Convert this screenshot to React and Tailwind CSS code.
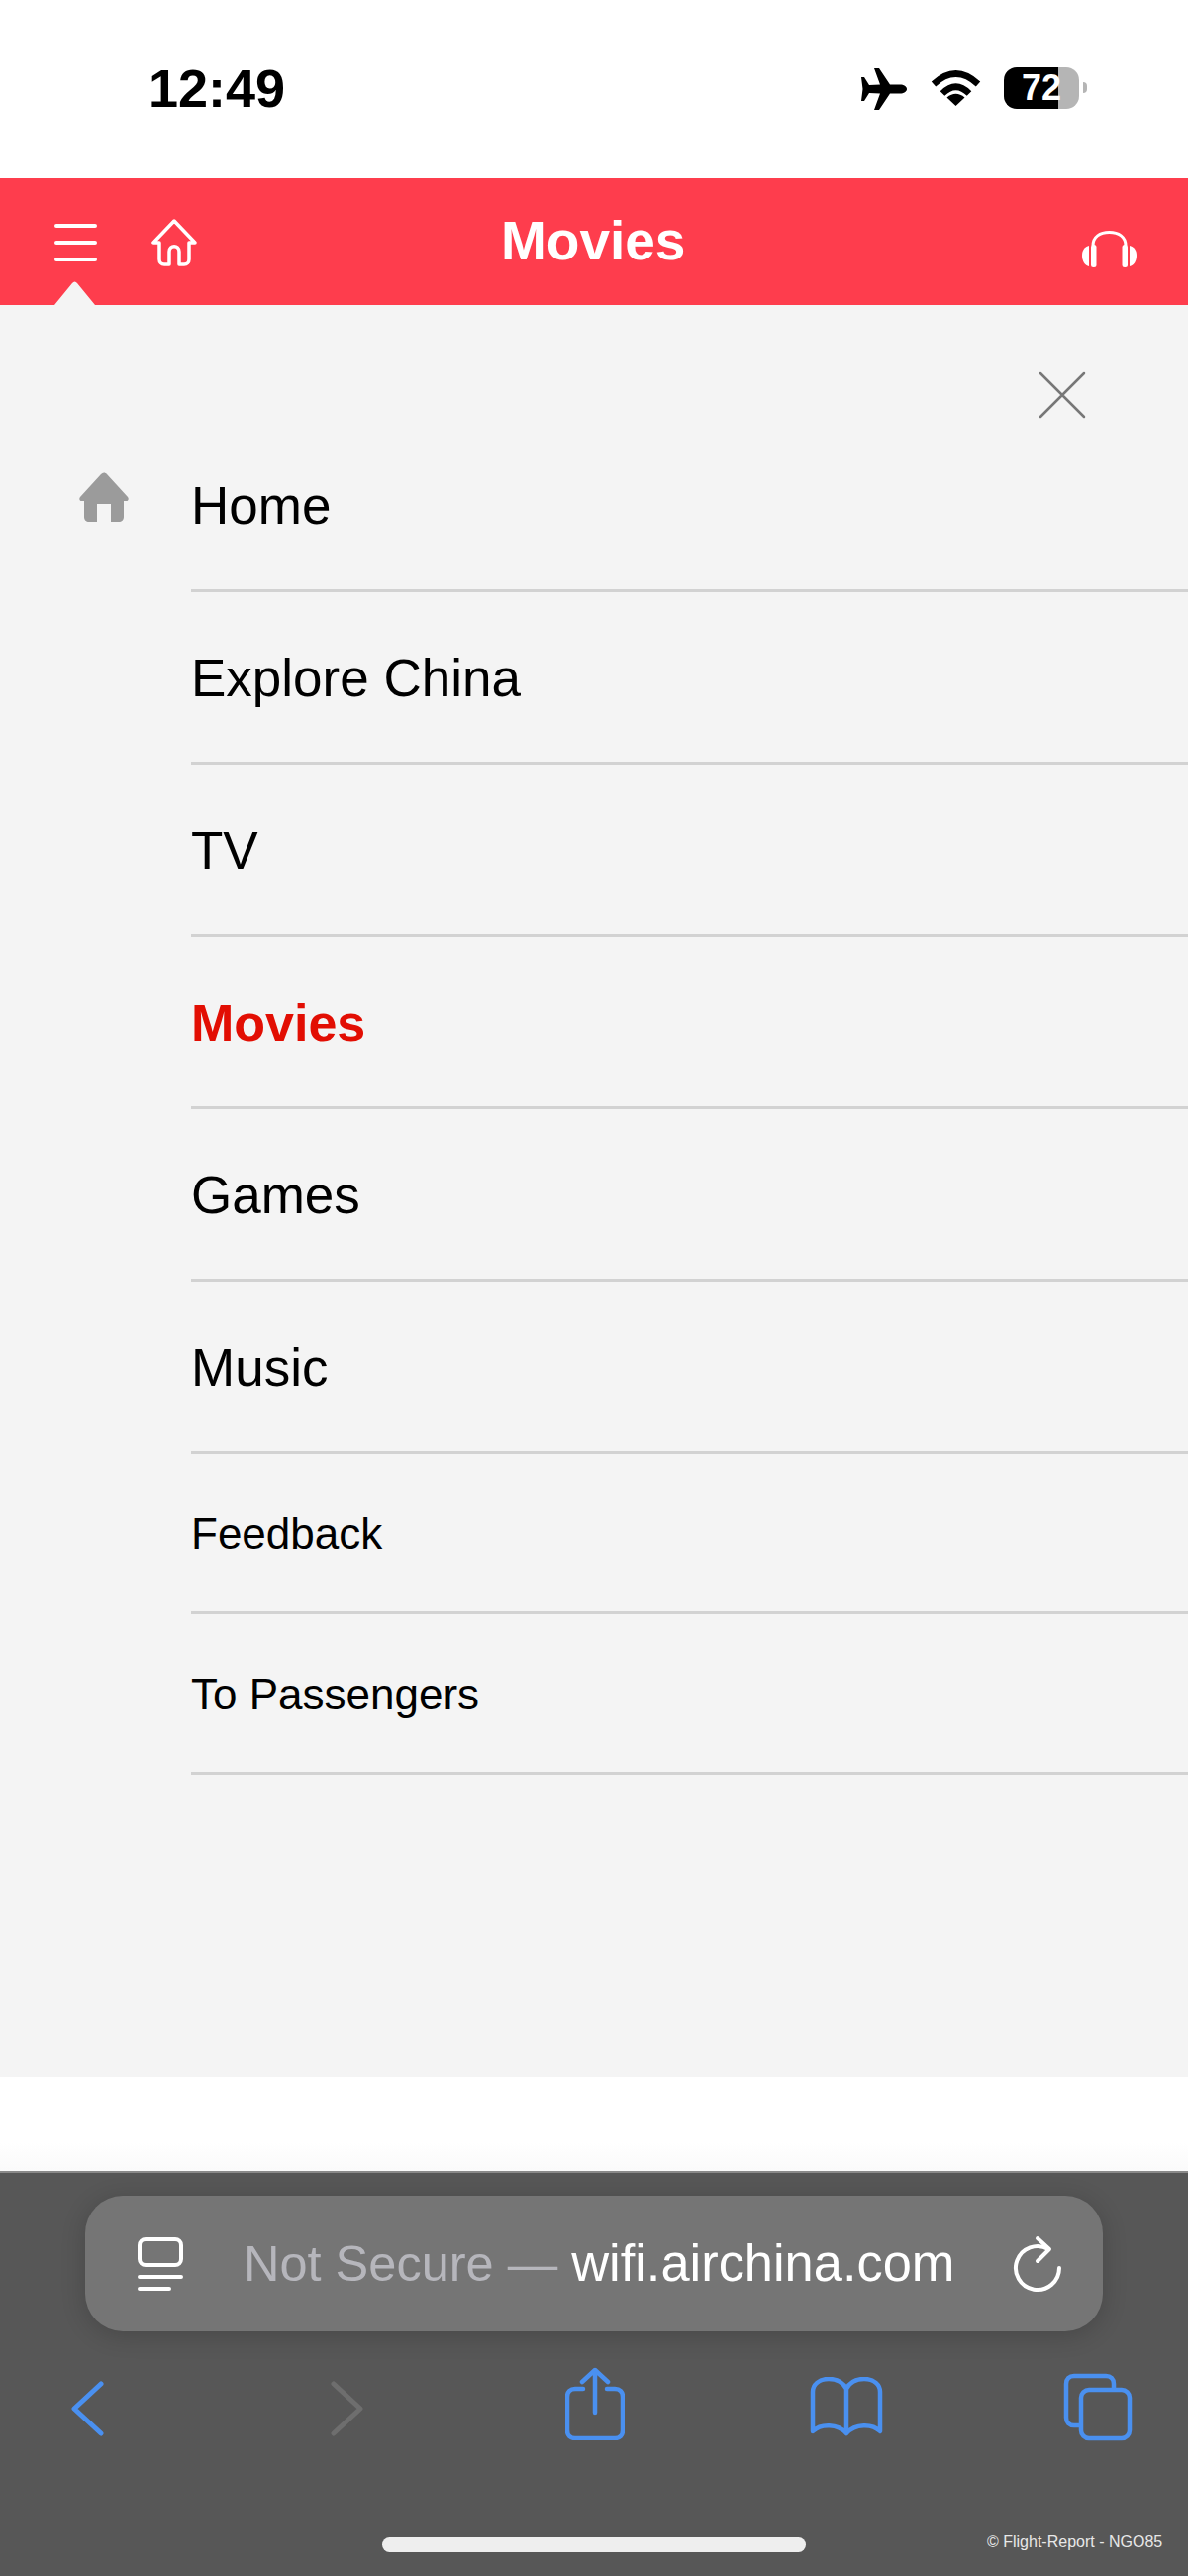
const menuItems = [
  { label: "Home", icon: true },
  { label: "Explore China" },
  { label: "TV" },
  { label: "Movies", active: true },
  { label: "Games" },
  { label: "Music" },
  { label: "Feedback", small: true },
  { label: "To Passengers", small: true },
];

const font = "font-['Liberation_Sans',Arial,sans-serif]";

const StatusBar = () => (
  <div className="h-[180px] bg-white flex items-start text-black">
    <span className="ml-[150px] mt-[59px] text-[54px] leading-[60px] font-bold">12:49</span>
    <svg className="ml-[581px] mt-[69px]" width="48" height="42" viewBox="0 0 48 42" fill="#000">
      <path d="M47 21c0-2.500-3-4.500-7-4.500L30 16.500 19 0h-5l6 16.500L9 17 4 9H1l1.500 12L1 33h3l5-8 11 .5L14 42h5l11-16.500 10 0c4 0 7-2 7-4.500z" />
    </svg>
    <svg className="ml-[23px] mt-[70px]" width="51" height="37" viewBox="0 0 51 37" fill="none" stroke="#000" strokeWidth="6.500">
      <path d="M3 15Q25.500-6 48 15" />
      <path d="M12 24.500Q25.500 11 39 24.500" />
      <path d="M16.500 28.500Q25.500 21 34.500 28.500L25.500 37z" fill="#000" stroke="none" />
    </svg>
    <div className="ml-[23px] mt-[68px] w-[76px] h-[42px] rounded-[13px] bg-[linear-gradient(90deg,#000_72%,#b5b5b5_72%)] text-white text-[36px] leading-[42px] font-bold text-center">
      72
    </div>
    <div className="ml-[4px] mt-[83px] w-[4px] h-[11px] rounded-r-full bg-[#b5b5b5]"></div>
  </div>
);

const Header = () => (
  <div className="relative h-[128px] bg-[#fe3d4d] flex items-start text-white">
    <div className="ml-[55px] mt-[46px] w-[43px] flex flex-col gap-[13px]">
      <div className="h-[4px] rounded-full bg-white"></div>
      <div className="h-[4px] rounded-full bg-white"></div>
      <div className="h-[4px] rounded-full bg-white"></div>
    </div>
    <svg className="ml-[55px] mt-[41px]" width="46" height="48" viewBox="0 0 46 48" fill="none" stroke="#fff" strokeWidth="3.500" strokeLinejoin="round">
      <path d="M23 2 2 24h6v17c0 3 2 5 5 5h5V33c0-7 10-7 10 0v13h5c3 0 5-2 5-5V24h6z" />
    </svg>
    <span className="ml-[307px] mt-[32px] text-[55px] leading-[62px] font-bold">Movies</span>
    <svg className="ml-auto mr-[52px] mt-[53px]" width="55" height="37" viewBox="0 0 55 37" fill="#fff">
      <path d="M11 15C11 6 18 1.500 27.500 1.500S44 6 44 15" fill="none" stroke="#fff" strokeWidth="3" />
      <path d="M7 15v21C3 35 0 31 0 25s3-9 7-10z" />
      <rect x="9" y="14" width="5.500" height="23" rx="2.500" />
      <path d="M48 15v21c4-1 7-5 7-11s-3-9-7-10z" />
      <rect x="40.500" y="14" width="5.500" height="23" rx="2.500" />
    </svg>
    {/* little arrow above the open menu */}
    <svg className="absolute left-[55px] top-[104px]" width="41" height="24" viewBox="0 0 41 24" fill="#f4f4f4">
      <path d="M0 24 18 2c1.500-2 3.500-2 5 0l18 22z" />
    </svg>
  </div>
);

const Menu = () => (
  <div className="h-[1789px] bg-[#f4f4f4] pt-[67px]">
    <div className="h-[49px] flex justify-end pr-[103px]">
      <svg width="48" height="48" viewBox="0 0 48 48" stroke="#777" strokeWidth="2.500" strokeLinecap="round">
        <path d="M2 2 46 46M46 2 2 46" />
      </svg>
    </div>
    {menuItems.map((item) => (
      <div key={item.label} className="flex">
        <div className="w-[193px] pl-[80px] pt-[53px]">
          {item.icon && (
            <svg width="50" height="50" viewBox="0 0 50 50" fill="#9b9b9b">
              <path d="M22 2c1.800-2 4.200-2 6 0l21 23c1.500 2 .5 4-1.500 4H45v16c0 3-2 5-5 5h-8V32H18v18h-8c-3 0-5-2-5-5V29H2.500c-2 0-3-2-1.500-4z" />
            </svg>
          )}
        </div>
        <div
          className={`flex-1 flex items-center pt-[2px] border-b-[3px] border-[#d2d2d2] ${
            item.small ? "h-[162px] text-[44px]" : "h-[174px]"
          } ${item.active ? "font-bold text-[#e20e03] text-[52px]" : "text-black"} ${
            !item.small && !item.active ? "text-[53px]" : ""
          }`}
        >
          {item.label}
        </div>
      </div>
    ))}
  </div>
);

const Toolbar = () => (
  <div className="h-[409px] bg-[#575757] border-t-[2px] border-[#8a8a8a] pt-[23px]">
    <div className="ml-[86px] w-[1028px] h-[137px] rounded-[38px] bg-[#757575] shadow-[0_4px_24px_rgba(0,0,0,0.18)] flex items-center">
      <svg className="ml-[53px]" width="46" height="54" viewBox="0 0 46 54" fill="none" stroke="#fff" strokeWidth="4" strokeLinecap="round">
        <rect x="2" y="2" width="42" height="26" rx="6" />
        <path d="M2 40h42M2 52h30" />
      </svg>
      <span className="ml-[61px] text-[50.500px] leading-[60px] whitespace-nowrap text-[#b6b6bc]">
        Not Secure — <span className="text-white text-[52.400px]">wifi.airchina.com</span>
      </span>
      <svg className="ml-[58px]" width="55" height="62" viewBox="20 12 55 62" fill="none" stroke="#fff" strokeWidth="4" strokeLinecap="round" strokeLinejoin="round">
        <path d="M68 47A22 22 0 1 1 57 28" />
        <path d="M46 17 58 28 46 40" />
      </svg>
    </div>
    <div className="h-[96px] mt-[36px] flex items-start text-[#4a90f0]">
      <svg className="ml-[70px] mt-[14px]" width="36" height="56" viewBox="0 0 36 56" fill="none" stroke="currentColor" strokeWidth="5" strokeLinecap="round" strokeLinejoin="round">
        <path d="M32 3 5 28 32 53" />
      </svg>
      <svg className="ml-[227px] mt-[14px]" width="36" height="56" viewBox="0 0 36 56" fill="none" stroke="#6e6e6e" strokeWidth="5" strokeLinecap="round" strokeLinejoin="round">
        <path d="M4 3 31 28 4 53" />
      </svg>
      <svg className="ml-[202px]" width="60" height="74" viewBox="0 0 60 74" fill="none" stroke="currentColor" strokeWidth="4.500" strokeLinecap="round" strokeLinejoin="round">
        <path d="M18 22h-8c-5 0-8 3-8 8v34c0 5 3 8 8 8h40c5 0 8-3 8-8V30c0-5-3-8-8-8h-8" />
        <path d="M30 46V3M17 15 30 3l13 12" />
      </svg>
      <svg className="ml-[187px] mt-[10px]" width="74" height="60" viewBox="0 0 74 60" fill="none" stroke="currentColor" strokeWidth="4.500" strokeLinecap="round" strokeLinejoin="round">
        <path d="M37 12C33 4 25 2 19 2 9 2 3 8 3 15v40c8-8 25-8 34 2 9-10 26-10 34-2V15c0-7-6-13-16-13-6 0-14 2-18 10v45" />
      </svg>
      <svg className="ml-[182px] mt-[6px]" width="70" height="69" viewBox="0 0 70 69" fill="none" stroke="currentColor" strokeWidth="4.500" strokeLinejoin="round">
        <path d="M17 53h-6c-5 0-8-3-8-8V11c0-5 3-8 8-8h32c5 0 8 3 8 8v6" />
        <rect x="18" y="17" width="49" height="49" rx="8" />
      </svg>
    </div>
    <div className="mt-[72px] flex items-center">
      <div className="ml-[386px] w-[428px] h-[15px] rounded-full bg-[#eeeeee]"></div>
      <span className="ml-[183px] mb-[4px] text-[16px] leading-[18px] whitespace-nowrap text-[#e8e8e8]">© Flight-Report - NGO85</span>
    </div>
  </div>
);

const App = () => (
  <div className={`w-[1200px] h-[2601px] overflow-hidden bg-white ${font}`}>
    <StatusBar />
    <Header />
    <Menu />
    <div className="h-[95px] bg-[linear-gradient(#ffffff_70%,#fafafa)]"></div>
    <Toolbar />
  </div>
);

export default App;
